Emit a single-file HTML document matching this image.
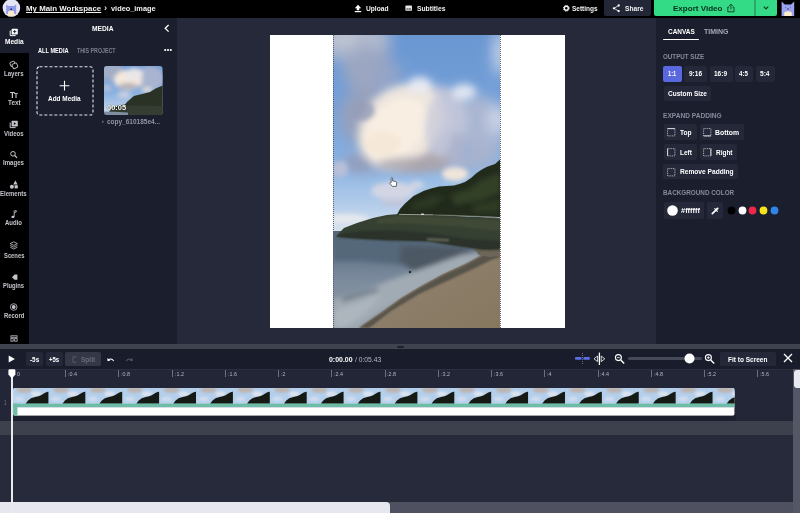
<!DOCTYPE html>
<html>
<head>
<meta charset="utf-8">
<title>video_image</title>
<style>
*{box-sizing:border-box;margin:0;padding:0}
html,body{width:800px;height:513px;overflow:hidden;background:#272b3c}
body{position:relative;font-family:"Liberation Sans",sans-serif;font-size:7px;color:#fff;font-weight:bold}
.a{position:absolute}
.t{position:absolute;white-space:nowrap;line-height:1;transform-origin:0 50%}
svg{position:absolute;overflow:visible}
</style>
</head>
<body>
<div class="a" style="left:0px;top:0px;width:800px;height:18px;background:#000;"></div>
<div class="a" style="left:0px;top:18px;width:29px;height:327px;background:#000;"></div>
<div class="a" style="left:29px;top:18px;width:148px;height:327px;background:#1a1e2d;"></div>
<div class="a" style="left:177px;top:18px;width:479px;height:327px;background:#252939;"></div>
<div class="a" style="left:656px;top:18px;width:144px;height:327px;background:#1a1e2d;"></div>
<div class="a" style="left:0px;top:343.8px;width:800px;height:5.2px;background:#3f4350;"></div>
<div class="a" style="left:0px;top:349px;width:800px;height:20px;background:#191d2b;"></div>
<div class="a" style="left:0px;top:369px;width:793px;height:52px;background:#222636;"></div>
<div class="a" style="left:0px;top:421px;width:793px;height:82px;background:#262a3a;"></div>
<div class="a" style="left:397px;top:345.6px;width:6.5px;height:2px;background:#1c202e;border-radius:1px"></div>
<div class="a" style="left:0px;top:369px;width:793px;height:0.8px;background:#2b2f3e;"></div>
<div class="a" style="left:270px;top:35px;width:295px;height:293px;background:#fff;"></div>
<svg style="left:333px;top:35px" width="167" height="293" viewBox="0 0 167 293">
<defs>
<linearGradient id="sky" x1="0" y1="0" x2="0" y2="1">
<stop offset="0" stop-color="#6a96d1"/><stop offset=".4" stop-color="#76a2da"/><stop offset=".65" stop-color="#8ab2e2"/><stop offset=".85" stop-color="#b3cdea"/><stop offset="1" stop-color="#dde5ee"/>
</linearGradient>
<linearGradient id="sea" x1="0" y1="0" x2="0" y2="1">
<stop offset="0" stop-color="#52657a"/><stop offset=".22" stop-color="#627588"/><stop offset=".5" stop-color="#7b8b9d"/><stop offset=".8" stop-color="#8894a2"/><stop offset="1" stop-color="#939da7"/>
</linearGradient>
<linearGradient id="sand" x1="0" y1="0" x2="1" y2="1">
<stop offset="0" stop-color="#7d705f"/><stop offset=".5" stop-color="#8d7e6a"/><stop offset="1" stop-color="#86775f"/>
</linearGradient>
<filter id="b10" x="-50%" y="-50%" width="200%" height="200%"><feGaussianBlur stdDeviation="10"/></filter>
<filter id="b8" x="-50%" y="-50%" width="200%" height="200%"><feGaussianBlur stdDeviation="7"/></filter>
<filter id="b5" x="-50%" y="-50%" width="200%" height="200%"><feGaussianBlur stdDeviation="4.500"/></filter>
<filter id="b3" x="-50%" y="-50%" width="200%" height="200%"><feGaussianBlur stdDeviation="2.500"/></filter>
<filter id="b1" x="-50%" y="-50%" width="200%" height="200%"><feGaussianBlur stdDeviation="1"/></filter>
<filter id="bh" x="-50%" y="-50%" width="200%" height="200%"><feGaussianBlur stdDeviation="0.500"/></filter>
<clipPath id="pc"><rect x="0" y="0" width="167" height="293"/></clipPath>
</defs>
<g clip-path="url(#pc)">
<rect x="0" y="0" width="167" height="200" fill="url(#sky)"/>
<!-- grey cloud masses -->
<g filter="url(#b8)">
<ellipse cx="20" cy="6" rx="38" ry="20" fill="#b0b9ce"/>
<ellipse cx="36" cy="36" rx="26" ry="24" fill="#9ba6c1"/>
<ellipse cx="30" cy="82" rx="24" ry="28" fill="#96a1bb"/>
<ellipse cx="56" cy="42" rx="12" ry="18" fill="#93a4c8"/>
<ellipse cx="144" cy="92" rx="28" ry="32" fill="#aab6d2"/>
<ellipse cx="130" cy="122" rx="36" ry="14" fill="#a7b2ce"/>
<ellipse cx="30" cy="128" rx="20" ry="9" fill="#95a1c0"/>
<ellipse cx="167" cy="18" rx="7" ry="22" fill="#ccd6e8"/>
<ellipse cx="165" cy="84" rx="9" ry="14" fill="#d0d8ea"/>
</g>
<g filter="url(#b5)">
<ellipse cx="10" cy="4" rx="13" ry="6" fill="#bdc4d3"/>
<ellipse cx="130" cy="114" rx="6" ry="6" fill="#86aee0"/>
</g>
<!-- bright cloud -->
<g filter="url(#b5)">
<ellipse cx="104" cy="84" rx="30" ry="34" fill="#bfc5d9"/>
<ellipse cx="116" cy="112" rx="18" ry="16" fill="#adb4cd"/>
<ellipse cx="80" cy="124" rx="34" ry="11" fill="#b3adb6"/>
<ellipse cx="67" cy="91" rx="47" ry="37" transform="rotate(-46 67 91)" fill="#efe6de"/>
<ellipse cx="87" cy="50" rx="12" ry="8" fill="#e8eaf2"/>
<ellipse cx="131" cy="57" rx="12" ry="8" fill="#e1e7f2"/>
<ellipse cx="26" cy="128" rx="12" ry="7" fill="#939fbd"/>
</g>
<g filter="url(#b3)">
<ellipse cx="63" cy="94" rx="36" ry="25" transform="rotate(-46 63 94)" fill="#f8eee2"/>
<ellipse cx="50" cy="108" rx="18" ry="12" fill="#f6e8d8"/>
<ellipse cx="30" cy="76" rx="12" ry="10" fill="#959eb8" opacity=".8"/>
<ellipse cx="106" cy="92" rx="14" ry="30" fill="#c6c9db" opacity=".7" filter="url(#b3)"/>
</g>
<ellipse cx="80" cy="130" rx="36" ry="7" fill="#a8a2aa" opacity=".8" filter="url(#b5)"/>
<!-- lower small clouds -->
<g filter="url(#b3)">
<ellipse cx="122" cy="139" rx="13" ry="7" fill="#f0e5da"/>
<ellipse cx="60" cy="156" rx="22" ry="9" fill="#d3d5e4"/>
<ellipse cx="62" cy="168" rx="14" ry="4" fill="#c0c6da"/>
<ellipse cx="7" cy="134" rx="8" ry="8" fill="#b9c0d8"/>
<ellipse cx="12" cy="184" rx="24" ry="5" fill="#e6e9ef"/>
<ellipse cx="84" cy="150" rx="7" ry="4" fill="#cfd6e6"/>
</g>
<!-- sea -->
<rect x="0" y="196" width="167" height="97" fill="url(#sea)"/>
<g filter="url(#b3)">
<path d="M0 203 L60 205 L120 211 L148 217 L124 228 L70 230 L30 226 L0 226Z" fill="#55677a"/>
<path d="M68 210 L130 212 L144 221 L118 234 L80 236 L66 226Z" fill="#4e5965"/>
<path d="M0 264 L30 256 L66 242 L100 230 L128 220 L146 217 L150 221 L122 240 L84 258 L52 274 L24 293 L0 293Z" fill="#a1abb4"/>
<path d="M0 276 L26 268 L50 258 L36 274 L12 293 L0 293Z" fill="#adb5bd"/>
<path d="M8 263 L44 253 L46 256 L10 267Z" fill="#6c7986"/>
</g>
<circle cx="77" cy="237" r="1.300" fill="#2a2c2e"/>
<!-- beach -->
<path d="M167 208 L156 214 L147 221 L132 229 L110 239 L88 251 L68 263 L50 276 L26 293 L167 293Z" fill="url(#sand)"/>
<path d="M167 210 L156 215 L147 222 L132 230 L110 240 L88 252 L68 264 L50 277 L26 293 L36 293 L58 276 L86 259 L114 246 L140 234 L158 225 L167 222Z" fill="#57524a" filter="url(#b1)"/>
<path d="M140 213 L150 209 L167 205 L167 221 L156 222 L146 220Z" fill="#6d6658" filter="url(#bh)"/>
<path d="M158 208 L167 206 L167 214 L160 214Z" fill="#918a7c" filter="url(#b1)"/>
<!-- lower headland -->
<path d="M3 201.500 L7 197 L11 193 L24 188 L40 183 L54 180 L66 179 L100 180 L167 183 L167 213 L150 214 L134 212 L120 210 L100 206.500 L88 205.500 L40 204 L15 202.500Z" fill="#363f30" filter="url(#bh)"/>
<path d="M44 184 L66 180.500 L167 185 L167 196 L120 191 L66 188 L44 189Z" fill="#3f4935" filter="url(#b1)"/>
<path d="M3 202 L12 198 L30 196 L60 195.500 L95 198 L133 204 L167 206 L167 215 L150 215 L133 212.500 L95 206.500 L52 205.500 L20 203.500Z" fill="#2b302a" filter="url(#b1)"/>
<path d="M94 203 L116 204 L116 206.500 L94 205.500Z" fill="#66665b" filter="url(#b1)"/>
<!-- upper hill -->
<path d="M64 179.500 L67 174 L72 168.500 L80.500 161 L91 155.800 L98 153.500 L106 151.500 L121 150.400 L128 148.500 L132 147 L138 143 L143 138.600 L148 135 L153.500 132 L162 129 L167 124.500 L167 182 L120 180.500Z" fill="#212b1b" filter="url(#bh)"/>
<g filter="url(#b3)">
<path d="M118 160 L136 154 L150 144 L167 138 L167 158 L146 166 L122 170Z" fill="#324026"/>
<path d="M80 168 L100 160 L112 162 L100 172 L78 176Z" fill="#2b3722"/>
<path d="M140 170 L167 164 L167 178 L140 178Z" fill="#2e3a24"/>
</g>
<!-- road -->
<path d="M66 179.400 L100 179.800" stroke="#b4b4ac" stroke-width="0.800" fill="none"/>
<path d="M100 179.800 L120 180.300 L150 181.500 L167 183.200" stroke="#74786a" stroke-width="0.700" fill="none"/>
<rect x="88" y="178.600" width="3" height="1.200" fill="#e8e8e4"/>
</g>
</svg>
<div class="a" style="left:333px;top:35px;width:1px;height:293px;background:transparent;border-left:1px dotted #5a606c"></div>
<div class="a" style="left:500px;top:35px;width:1px;height:293px;background:transparent;border-left:1px dotted #5a606c"></div>
<svg style="left:389px;top:177px" width="9" height="11" viewBox="0 0 9 11"><path d="M2.200 5.600 L2.200 1.400 Q2.200 0.600 2.900 0.600 Q3.600 0.600 3.600 1.400 L3.600 4 L6.800 4.600 Q7.800 4.900 7.700 6 L7.300 9.400 L3.400 9.400 L1 6.600 Q0.700 5.800 1.400 5.700Z" fill="#fff" stroke="#333" stroke-width="0.700"/></svg>
<svg style="left:0;top:0" width="24" height="18" viewBox="0 0 24 18">
<circle cx="11.400" cy="8" r="8.800" fill="#e4e4f4"/>
<path d="M6.200 14 L6.200 4.600 L8.300 6 L14 6 L16.200 4.600 L16.200 14Z" fill="#909cea"/>
<path d="M8 16.200 L8 12.500 Q8 10.600 11.100 10.600 Q14.200 10.600 14.200 12.500 L14.200 16.200Z" fill="#fbe8c6"/>
<circle cx="11.200" cy="9.200" r="0.900" fill="#2b2f55"/>
</svg>
<div class="t" style="left:26.00px;top:5.00px;font-size:7.8px;color:#f2f2f2;font-weight:bold;transform:scaleX(1.011);text-decoration:underline">My Main Workspace</div>
<div class="t" style="left:103.50px;top:4.00px;font-size:8.5px;color:#d8d8d8;font-weight:bold;transform:scaleX(1.130);">›</div>
<div class="t" style="left:110.80px;top:5.00px;font-size:7.8px;color:#f2f2f2;font-weight:bold;transform:scaleX(0.944);">video_image</div>
<svg style="left:354px;top:4px" width="8" height="9" viewBox="0 0 8 9">
<path d="M4 0.800 L7.200 4.200 L5.300 4.200 L5.300 6.300 L2.700 6.300 L2.700 4.200 L0.800 4.200Z" fill="#fff"/>
<rect x="0.800" y="7" width="6.400" height="1.200" fill="#fff"/>
</svg>
<div class="t" style="left:365.60px;top:5.00px;font-size:7.2px;color:#f2f2f2;font-weight:bold;transform:scaleX(0.926);">Upload</div>
<svg style="left:405px;top:5px" width="8" height="7" viewBox="0 0 8 7">
<rect x="0.400" y="0.600" width="6.600" height="5.200" rx="0.800" fill="#e8e8e8"/>
<rect x="1.400" y="3.500" width="1.500" height="1" fill="#222"/><rect x="3.400" y="3.500" width="2.600" height="1" fill="#222"/>
</svg>
<div class="t" style="left:417.00px;top:5.00px;font-size:7.2px;color:#f2f2f2;font-weight:bold;transform:scaleX(0.937);">Subtitles</div>
<svg style="left:562px;top:4px" width="9" height="9" viewBox="0 0 9 9">
<circle cx="4.300" cy="4.300" r="2" fill="none" stroke="#f2f2f2" stroke-width="1.400"/>
<circle cx="4.300" cy="4.300" r="2.900" fill="none" stroke="#f2f2f2" stroke-width="1" stroke-dasharray="1.140 1.138"/>
</svg>
<div class="t" style="left:572.30px;top:5.00px;font-size:7.2px;color:#f2f2f2;font-weight:bold;transform:scaleX(0.901);">Settings</div>
<div class="a" style="left:604px;top:0px;width:47px;height:16px;background:#222637;border-radius:0 0 2px 2px"></div>
<svg style="left:612px;top:4px" width="9" height="9" viewBox="0 0 9 9">
<path d="M6.500 1.600 L2 4.300 L6.500 7" stroke="#fff" stroke-width="0.800" fill="none"/>
<circle cx="6.700" cy="1.500" r="1.150" fill="#fff"/><circle cx="1.900" cy="4.300" r="1.150" fill="#fff"/><circle cx="6.700" cy="7.100" r="1.150" fill="#fff"/>
</svg>
<div class="t" style="left:624.50px;top:5.00px;font-size:7.2px;color:#f2f2f2;font-weight:bold;transform:scaleX(0.924);">Share</div>
<div class="a" style="left:654px;top:0px;width:123px;height:16px;background:#34db87;border-radius:0 0 2px 2px"></div>
<div class="a" style="left:754.3px;top:0px;width:1.3px;height:16px;background:#2aa96a;"></div>
<div class="t" style="left:673.00px;top:5.00px;font-size:7.8px;color:#07301a;font-weight:bold;transform:scaleX(1.032);">Export Video</div>
<svg style="left:726px;top:3px" width="10" height="10" viewBox="0 0 10 10">
<path d="M3.200 4 L1.800 4 L1.800 8.800 L8 8.800 L8 4 L6.600 4" stroke="#0b3b20" stroke-width="0.900" fill="none"/>
<path d="M4.900 6.500 L4.900 1.200 M3.200 2.800 L4.900 1.100 L6.600 2.800" stroke="#0b3b20" stroke-width="0.900" fill="none"/>
</svg>
<svg style="left:763px;top:6px" width="6" height="4" viewBox="0 0 6 4">
<path d="M0.800 0.700 L3 2.900 L5.200 0.700" stroke="#0b3b20" stroke-width="1.200" fill="none"/>
</svg>
<svg style="left:781px;top:1px" width="14" height="16" viewBox="0 0 14 16">
<path d="M0.600 15.100 L0.600 0.500 L3.800 3.400 L10 3.400 L13.200 0.500 L13.200 15.100Z" fill="#9aa3ee"/>
<path d="M3.200 15.100 L3.200 12.600 Q3.200 10.200 7 10.200 Q10.800 10.200 10.800 12.600 L10.800 15.100Z" fill="#fcecc8"/>
<path d="M6 7.600 L8 7.600 L7 9Z" fill="#262a50"/>
<circle cx="4.400" cy="6.300" r="0.550" fill="#5560c8"/><circle cx="9.600" cy="6.300" r="0.550" fill="#5560c8"/>
</svg>
<div class="a" style="left:0px;top:18px;width:29px;height:34.6px;background:#1a1e2d;"></div>
<svg style="left:9px;top:28px" width="10" height="9" viewBox="0 0 10 9"><path d="M1.200 2.600 L1.200 7.600 L6.600 7.600" stroke="#fff" stroke-width="1" fill="none"/><rect x="2.600" y="0.800" width="6.200" height="5.600" rx="0.600" fill="#fff"/><path d="M5.700 2 L5.700 5.200 M4.100 3.600 L7.300 3.600" stroke="#1b1f2e" stroke-width="0.900"/></svg>
<div class="t" style="left:4.60px;top:38.00px;font-size:7.0px;color:#fff;font-weight:bold;transform:scaleX(0.938);">Media</div>
<svg style="left:9px;top:60px" width="10" height="10" viewBox="0 0 10 10"><rect x="1.200" y="1.600" width="4.800" height="4.400" rx="1.200" fill="none" stroke="#c4c4cc" stroke-width="0.900" transform="rotate(-25 3.600 3.800)"/><rect x="3.400" y="3.400" width="5" height="4.800" rx="1.200" fill="#000" stroke="#c4c4cc" stroke-width="0.900" transform="rotate(-25 5.900 5.800)"/></svg>
<div class="t" style="left:3.60px;top:70.00px;font-size:7.0px;color:#c4c4cc;font-weight:bold;transform:scaleX(0.868);">Layers</div>
<div class="t" style="left:9.80px;top:91.00px;font-size:9px;color:#d0d0d6;font-weight:bold;transform:scaleX(0.873);">T</div>
<div class="t" style="left:14.00px;top:92.00px;font-size:7px;color:#d0d0d6;font-weight:bold;transform:scaleX(0.935);">T</div>
<div class="t" style="left:7.60px;top:99.00px;font-size:7.0px;color:#c4c4cc;font-weight:bold;transform:scaleX(0.908);">Text</div>
<svg style="left:9px;top:120px" width="10" height="9" viewBox="0 0 10 9"><path d="M1.200 2.600 L1.200 7.600 L6.600 7.600" stroke="#c4c4cc" stroke-width="1" fill="none"/><rect x="2.600" y="0.800" width="6.200" height="5.600" rx="0.600" fill="#c4c4cc"/><path d="M4.900 2.200 L7 3.600 L4.900 5Z" fill="#000"/></svg>
<div class="t" style="left:4.00px;top:130.00px;font-size:7.0px;color:#c4c4cc;font-weight:bold;transform:scaleX(0.859);">Videos</div>
<svg style="left:9px;top:150px" width="10" height="10" viewBox="0 0 10 10"><circle cx="4" cy="3.800" r="2.300" fill="none" stroke="#c4c4cc" stroke-width="1"/><path d="M5.700 5.500 L8 7.800" stroke="#c4c4cc" stroke-width="1.200"/></svg>
<div class="t" style="left:3.20px;top:159.00px;font-size:7.0px;color:#c4c4cc;font-weight:bold;transform:scaleX(0.870);">Images</div>
<svg style="left:9px;top:180px" width="10" height="10" viewBox="0 0 10 10"><path d="M6.400 0.600 L8.600 4.400 L4.200 4.400Z" fill="#c4c4cc"/><circle cx="2.900" cy="6.800" r="2" fill="#c4c4cc"/><rect x="5.600" y="5.200" width="3.200" height="3.200" fill="#c4c4cc"/></svg>
<div class="t" style="left:0.40px;top:190.00px;font-size:7.0px;color:#c4c4cc;font-weight:bold;transform:scaleX(0.855);">Elements</div>
<svg style="left:10px;top:210px" width="8" height="10" viewBox="0 0 8 10"><path d="M3.400 1.300 L6.200 0.600 L6.200 2 L4.200 2.500 L4.200 6.800" stroke="#c4c4cc" stroke-width="0.900" fill="none"/><ellipse cx="2.900" cy="6.900" rx="1.500" ry="1.200" fill="#c4c4cc"/></svg>
<div class="t" style="left:5.20px;top:219.00px;font-size:7.0px;color:#c4c4cc;font-weight:bold;transform:scaleX(0.857);">Audio</div>
<svg style="left:9px;top:241px" width="10" height="10" viewBox="0 0 10 10"><path d="M4.800 0.800 L8.400 2.600 L4.800 4.400 L1.200 2.600Z" fill="none" stroke="#c4c4cc" stroke-width="0.800"/><path d="M1.200 4.400 L4.800 6.200 L8.400 4.400 M1.200 6.200 L4.800 8 L8.400 6.200" fill="none" stroke="#c4c4cc" stroke-width="0.800"/></svg>
<div class="t" style="left:3.60px;top:252.00px;font-size:7.0px;color:#c4c4cc;font-weight:bold;transform:scaleX(0.832);">Scenes</div>
<svg style="left:9px;top:273px" width="10" height="8" viewBox="0 0 10 8"><path d="M1 4.200 L3 4.200 L5.600 1.600 L8.400 1.600 L8.400 6.800 L5.600 6.800 L3 4.200Z" fill="#c4c4cc"/></svg>
<div class="t" style="left:3.20px;top:282.00px;font-size:7.0px;color:#c4c4cc;font-weight:bold;transform:scaleX(0.831);">Plugins</div>
<svg style="left:9px;top:302px" width="10" height="10" viewBox="0 0 10 10"><circle cx="4.700" cy="5" r="3.300" fill="none" stroke="#c4c4cc" stroke-width="0.800"/><circle cx="4.700" cy="5" r="1.900" fill="#c4c4cc"/></svg>
<div class="t" style="left:3.60px;top:312.00px;font-size:7.0px;color:#c4c4cc;font-weight:bold;transform:scaleX(0.846);">Record</div>
<svg style="left:9.5px;top:335px" width="8" height="7" viewBox="0 0 8 7"><rect x="0.900" y="0.800" width="6.200" height="1.500" fill="none" stroke="#c4c4cc" stroke-width="0.800"/><rect x="0.900" y="3.600" width="2.300" height="2.600" fill="none" stroke="#c4c4cc" stroke-width="0.800"/><rect x="4.700" y="3.600" width="2.400" height="2.600" fill="none" stroke="#c4c4cc" stroke-width="0.800"/></svg>
<div class="a" style="left:0;top:341px;width:29px;height:3px;overflow:hidden"><div class="t" style="left:1.500px;top:1.500px;font-size:7px;color:#8a8a92;transform:scaleX(.78)">Templates</div></div>
<div class="t" style="left:92.30px;top:25.00px;font-size:7.2px;color:#fff;font-weight:bold;transform:scaleX(0.931);">MEDIA</div>
<svg style="left:163px;top:24px" width="8" height="9" viewBox="0 0 8 9"><path d="M5.600 1 L2.200 4.300 L5.600 7.600" stroke="#fff" stroke-width="1.300" fill="none"/></svg>
<div class="t" style="left:38.00px;top:48.00px;font-size:6.8px;color:#fff;font-weight:bold;transform:scaleX(0.829);">ALL MEDIA</div>
<div class="t" style="left:77.00px;top:48.00px;font-size:6.8px;color:#7c8091;font-weight:bold;transform:scaleX(0.780);">THIS PROJECT</div>
<svg style="left:163px;top:48px" width="10" height="4" viewBox="0 0 10 4"><circle cx="2.200" cy="2" r="1.100" fill="#fff"/><circle cx="5" cy="2" r="1.100" fill="#fff"/><circle cx="7.800" cy="2" r="1.100" fill="#fff"/></svg>
<svg style="left:36px;top:66px" width="58" height="50" viewBox="0 0 58 50"><rect x="1" y="0.800" width="56" height="48.200" rx="2.500" fill="none" stroke="#e6e6ea" stroke-width="1.100" stroke-dasharray="3 2"/><path d="M28.500 14.800 L28.500 24.600 M23.600 19.700 L33.400 19.700" stroke="#fff" stroke-width="1.100"/></svg>
<div class="t" style="left:48.20px;top:95.00px;font-size:7.2px;color:#fff;font-weight:bold;transform:scaleX(0.896);">Add Media</div>
<svg style="left:103.500px;top:66.200px" width="58.700" height="49" viewBox="0 0 58.700 49">
<defs><clipPath id="tc"><rect x="0" y="0" width="58.700" height="49" rx="3"/></clipPath>
<linearGradient id="tsk" x1="0" y1="0" x2="0" y2="1"><stop offset="0" stop-color="#6f9ad2"/><stop offset=".55" stop-color="#8ab1e0"/><stop offset="1" stop-color="#cfdcec"/></linearGradient>
<filter id="tb" x="-50%" y="-50%" width="200%" height="200%"><feGaussianBlur stdDeviation="2.200"/></filter>
<filter id="tb1" x="-50%" y="-50%" width="200%" height="200%"><feGaussianBlur stdDeviation="0.500"/></filter></defs>
<g clip-path="url(#tc)">
<rect width="58.700" height="49" fill="url(#tsk)"/>
<g filter="url(#tb)"><ellipse cx="8" cy="6" rx="12" ry="9" fill="#a3adc6"/><ellipse cx="46" cy="12" rx="14" ry="12" fill="#a9b4d0"/><ellipse cx="24" cy="14" rx="14" ry="10" fill="#f3e8dc"/><ellipse cx="30" cy="8" rx="9" ry="6" fill="#eae6e8"/><ellipse cx="24" cy="20" rx="10" ry="3" fill="#b7aeb4"/><ellipse cx="43" cy="24" rx="5" ry="2.500" fill="#e9e0d8"/><ellipse cx="20" cy="29" rx="7" ry="3" fill="#cfd2e2"/><ellipse cx="3" cy="22" rx="4" ry="3" fill="#bcc3da"/></g>
<path d="M5 46 L8 42 L14 39.500 L21 38.500 L23 36 L29.800 30 L38 28 L46 26 L51.600 22.500 L58.700 19.500 L58.700 49 L0 49 L0 46.500Z" fill="#2a3325" filter="url(#tb1)"/>
<path d="M8 43 L20 39.500 L58.700 40 L58.700 49 L20 49 L6 47Z" fill="#353d30" filter="url(#tb1)"/>
<path d="M0 45.500 L10 45.800 L24 46.600 L24 49 L0 49Z" fill="#7f8ea0"/>
</g></svg>
<div class="t" style="left:107.00px;top:104.00px;font-size:7.4px;color:#fff;font-weight:bold;transform:scaleX(1.014);text-shadow:0 0 1px #000">00:05</div>
<div class="t" style="left:102.30px;top:119.00px;font-size:5px;color:#9a9eae;font-weight:bold;transform:scaleX(1.081);">›</div>
<div class="t" style="left:107.00px;top:119.00px;font-size:6.8px;color:#9095a6;font-weight:bold;transform:scaleX(0.954);">copy_610185e4...</div>
<div class="t" style="left:667.50px;top:28.00px;font-size:7.2px;color:#fff;font-weight:bold;transform:scaleX(0.897);">CANVAS</div>
<div class="t" style="left:703.50px;top:28.00px;font-size:7.2px;color:#a4a8b8;font-weight:bold;transform:scaleX(0.972);">TIMING</div>
<div class="a" style="left:663px;top:38.7px;width:36px;height:1.8px;background:#fff;border-radius:1px"></div>
<div class="t" style="left:663.30px;top:54.00px;font-size:6.8px;color:#868a9b;font-weight:bold;transform:scaleX(0.916);">OUTPUT SIZE</div>
<div class="a" style="left:663px;top:66px;width:18.5px;height:16px;background:#5a68e0;border-radius:2px"></div>
<div class="t" style="left:668.00px;top:70.00px;font-size:7.0px;color:#fff;font-weight:bold;transform:scaleX(0.810);">1:1</div>
<div class="a" style="left:683.8px;top:66px;width:23.7px;height:16px;background:#242839;border-radius:2px"></div>
<div class="t" style="left:689.00px;top:70.00px;font-size:7.0px;color:#fff;font-weight:bold;transform:scaleX(0.928);">9:16</div>
<div class="a" style="left:710px;top:66px;width:22.5px;height:16px;background:#242839;border-radius:2px"></div>
<div class="t" style="left:714.20px;top:70.00px;font-size:7.0px;color:#fff;font-weight:bold;transform:scaleX(0.928);">16:9</div>
<div class="a" style="left:735px;top:66px;width:18px;height:16px;background:#242839;border-radius:2px"></div>
<div class="t" style="left:739.20px;top:70.00px;font-size:7.0px;color:#fff;font-weight:bold;transform:scaleX(0.890);">4:5</div>
<div class="a" style="left:755.5px;top:66px;width:19px;height:16px;background:#242839;border-radius:2px"></div>
<div class="t" style="left:760.00px;top:70.00px;font-size:7.0px;color:#fff;font-weight:bold;transform:scaleX(0.939);">5:4</div>
<div class="a" style="left:663.5px;top:85.7px;width:47.5px;height:15.6px;background:#242839;border-radius:2px"></div>
<div class="t" style="left:667.60px;top:90.00px;font-size:7.0px;color:#fff;font-weight:bold;transform:scaleX(0.928);">Custom Size</div>
<div class="t" style="left:663.30px;top:113.00px;font-size:6.8px;color:#868a9b;font-weight:bold;transform:scaleX(0.969);">EXPAND PADDING</div>
<div class="a" style="left:663.7px;top:124.2px;width:33.3px;height:15.8px;background:#242839;border-radius:2px"></div>
<svg style="left:667px;top:128.2px" width="8.500" height="8.500" viewBox="0 0 8.500 8.500"><rect x="0.600" y="0.600" width="7.300" height="7.300" fill="none" stroke="#d8d8de" stroke-width="0.800" stroke-dasharray="1 0.820"/><path d="M0.600 0.600 L7.900 0.600" stroke="#e4e4ea" stroke-width="0.900"/></svg>
<div class="t" style="left:679.60px;top:129.00px;font-size:7.0px;color:#fff;font-weight:bold;transform:scaleX(0.942);">Top</div>
<div class="a" style="left:699.5px;top:124.2px;width:44.3px;height:15.8px;background:#242839;border-radius:2px"></div>
<svg style="left:703px;top:128.2px" width="8.500" height="8.500" viewBox="0 0 8.500 8.500"><rect x="0.600" y="0.600" width="7.300" height="7.300" fill="none" stroke="#d8d8de" stroke-width="0.800" stroke-dasharray="1 0.820"/><path d="M0.600 7.900 L7.900 7.900" stroke="#e4e4ea" stroke-width="0.900"/></svg>
<div class="t" style="left:715.00px;top:129.00px;font-size:7.0px;color:#fff;font-weight:bold;transform:scaleX(0.980);">Bottom</div>
<div class="a" style="left:663.7px;top:144px;width:33.3px;height:16px;background:#242839;border-radius:2px"></div>
<svg style="left:667px;top:148px" width="8.500" height="8.500" viewBox="0 0 8.500 8.500"><rect x="0.600" y="0.600" width="7.300" height="7.300" fill="none" stroke="#d8d8de" stroke-width="0.800" stroke-dasharray="1 0.820"/><path d="M0.600 0.600 L0.600 7.900" stroke="#e4e4ea" stroke-width="0.900"/></svg>
<div class="t" style="left:679.60px;top:149.00px;font-size:7.0px;color:#fff;font-weight:bold;transform:scaleX(0.920);">Left</div>
<div class="a" style="left:699.5px;top:144px;width:37.5px;height:16px;background:#242839;border-radius:2px"></div>
<svg style="left:703px;top:148px" width="8.500" height="8.500" viewBox="0 0 8.500 8.500"><rect x="0.600" y="0.600" width="7.300" height="7.300" fill="none" stroke="#d8d8de" stroke-width="0.800" stroke-dasharray="1 0.820"/><path d="M7.900 0.600 L7.900 7.900" stroke="#e4e4ea" stroke-width="0.900"/></svg>
<div class="t" style="left:715.50px;top:149.00px;font-size:7.0px;color:#fff;font-weight:bold;transform:scaleX(0.923);">Right</div>
<div class="a" style="left:663.3px;top:163.7px;width:74.7px;height:15.5px;background:#242839;border-radius:2px"></div>
<svg style="left:667px;top:167.5px" width="8.500" height="8.500" viewBox="0 0 8.500 8.500"><rect x="0.600" y="0.600" width="7.300" height="7.300" fill="none" stroke="#d8d8de" stroke-width="0.800" stroke-dasharray="1 0.820"/><path d="" stroke="#e4e4ea" stroke-width="0.900"/></svg>
<div class="t" style="left:679.60px;top:168.00px;font-size:7.0px;color:#fff;font-weight:bold;transform:scaleX(0.944);">Remove Padding</div>
<div class="t" style="left:663.30px;top:190.00px;font-size:6.8px;color:#868a9b;font-weight:bold;transform:scaleX(0.933);">BACKGROUND COLOR</div>
<div class="a" style="left:664px;top:202px;width:40px;height:16.5px;background:#242839;border-radius:2px"></div>
<svg style="left:667px;top:204.700px" width="11" height="11" viewBox="0 0 11 11"><circle cx="5.500" cy="5.500" r="5.300" fill="#fff"/></svg>
<div class="t" style="left:680.60px;top:208.00px;font-size:6.8px;color:#fff;font-weight:bold;transform:scaleX(1.094);">#ffffff</div>
<div class="a" style="left:707px;top:202px;width:16px;height:16.5px;background:#242839;border-radius:2px"></div>
<svg style="left:710.500px;top:206px" width="9" height="9" viewBox="0 0 9 9"><path d="M1.300 7.700 L4.600 4.400" stroke="#fff" stroke-width="1.700" stroke-linecap="round"/><path d="M3.700 2.700 L6.300 5.300" stroke="#fff" stroke-width="1.100" stroke-linecap="round"/><path d="M5 4 L6.600 2.400" stroke="#fff" stroke-width="1.900" stroke-linecap="round"/></svg>
<svg style="left:727.2px;top:205.500px" width="9" height="9" viewBox="0 0 9 9"><circle cx="4.500" cy="4.500" r="3.900" fill="#000"/></svg>
<svg style="left:737.7px;top:205.500px" width="9" height="9" viewBox="0 0 9 9"><circle cx="4.500" cy="4.500" r="3.900" fill="#fff"/></svg>
<svg style="left:748.3px;top:205.500px" width="9" height="9" viewBox="0 0 9 9"><circle cx="4.500" cy="4.500" r="3.900" fill="#f0264a"/></svg>
<svg style="left:758.8px;top:205.500px" width="9" height="9" viewBox="0 0 9 9"><circle cx="4.500" cy="4.500" r="3.900" fill="#f6e51e"/></svg>
<svg style="left:769.5px;top:205.500px" width="9" height="9" viewBox="0 0 9 9"><circle cx="4.500" cy="4.500" r="3.900" fill="#2f84e4"/></svg>
<svg style="left:7.500px;top:355px" width="8" height="8" viewBox="0 0 8 8"><path d="M0.700 0.400 L6.900 3.900 L0.700 7.400Z" fill="#fff"/></svg>
<div class="a" style="left:26.3px;top:352.4px;width:16.5px;height:13.3px;background:#242839;border-radius:2px"></div>
<div class="t" style="left:30.20px;top:356.00px;font-size:7.0px;color:#fff;font-weight:bold;transform:scaleX(0.909);">-5s</div>
<div class="a" style="left:46.4px;top:352.4px;width:16.6px;height:13.3px;background:#242839;border-radius:2px"></div>
<div class="t" style="left:49.20px;top:356.00px;font-size:7.0px;color:#fff;font-weight:bold;transform:scaleX(0.859);">+5s</div>
<div class="a" style="left:65.2px;top:352.4px;width:36px;height:13.3px;background:#343846;border-radius:2px"></div>
<svg style="left:72px;top:355.500px" width="6" height="7" viewBox="0 0 6 7"><path d="M1 0.800 L1 6.200 M1 0.800 L4.400 0.800 M1 6.200 L4.400 6.200" stroke="#5b5f6e" stroke-width="0.900" fill="none"/></svg>
<div class="t" style="left:80.60px;top:356.00px;font-size:7.0px;color:#666a7a;font-weight:bold;transform:scaleX(0.936);">Split</div>
<svg style="left:107px;top:356.500px" width="8" height="6" viewBox="0 0 8 6"><path d="M0.400 1 L0.400 4 L3.400 4 L2.200 2.900 Q4.400 1.600 6.400 4.300 L7.300 3.900 Q4.800 0.200 1.500 2.100Z" fill="#fff"/></svg>
<svg style="left:124.500px;top:356.500px" width="8" height="6" viewBox="0 0 8 6"><path d="M7.600 1 L7.600 4 L4.600 4 L5.800 2.900 Q3.600 1.600 1.600 4.300 L0.700 3.900 Q3.200 0.200 6.500 2.100Z" fill="#555968"/></svg>
<div class="t" style="left:328.60px;top:356.00px;font-size:7.0px;color:#fff;font-weight:bold;transform:scaleX(0.994);">0:00.00</div>
<div class="t" style="left:354.60px;top:356.00px;font-size:7.0px;color:#b4b8c6;font-weight:normal;transform:scaleX(0.962);">/ 0:05.43</div>
<svg style="left:574px;top:352px" width="17" height="13" viewBox="0 0 17 13"><rect x="1" y="5" width="6.600" height="2.800" rx="1" fill="#5a6ee6"/><rect x="9.300" y="5" width="6.600" height="2.800" rx="1" fill="#5a6ee6"/><path d="M8.500 1 L8.500 12" stroke="#8a90a8" stroke-width="0.700" stroke-dasharray="1 1"/></svg>
<svg style="left:593px;top:351.500px" width="13" height="14" viewBox="0 0 13 14"><path d="M6.400 0.600 L6.400 13" stroke="#fff" stroke-width="1.300"/><path d="M4.600 4 L4.600 9.600 L1 6.800Z M8.200 4 L8.200 9.600 L11.800 6.800Z" fill="none" stroke="#fff" stroke-width="0.800"/></svg>
<svg style="left:614px;top:353px" width="12" height="12" viewBox="0 0 12 12"><circle cx="4.400" cy="4.600" r="3" fill="none" stroke="#fff" stroke-width="1.100"/><path d="M6.700 6.900 L10.200 10.400" stroke="#fff" stroke-width="1.400"/><path d="M3 4.600 L5.800 4.600" stroke="#fff" stroke-width="0.800"/></svg>
<div class="a" style="left:628px;top:356.6px;width:74px;height:3px;background:#444857;border-radius:1.500px"></div>
<svg style="left:684px;top:352.500px" width="11" height="11" viewBox="0 0 11 11"><circle cx="5.500" cy="5.500" r="5" fill="#fff"/></svg>
<svg style="left:704px;top:353px" width="12" height="12" viewBox="0 0 12 12"><circle cx="4.400" cy="4.600" r="3" fill="none" stroke="#fff" stroke-width="1.100"/><path d="M6.700 6.900 L10.200 10.400" stroke="#fff" stroke-width="1.400"/><path d="M3 4.600 L5.800 4.600 M4.400 3.200 L4.400 6" stroke="#fff" stroke-width="0.800"/></svg>
<div class="a" style="left:720px;top:352.2px;width:55.7px;height:13.6px;background:#242839;border-radius:2px"></div>
<div class="t" style="left:727.60px;top:356.00px;font-size:7.0px;color:#fff;font-weight:bold;transform:scaleX(0.929);">Fit to Screen</div>
<svg style="left:783px;top:352.500px" width="10" height="10" viewBox="0 0 10 10"><path d="M1 1 L9 9 M9 1 L1 9" stroke="#fff" stroke-width="1.300"/></svg>
<div class="t" style="left:16.80px;top:371.00px;font-size:6px;color:#b2b6c4;font-weight:normal;transform:scaleX(0.899);">0</div>
<div class="a" style="left:65.2px;top:370.3px;width:1px;height:7.2px;background:#6c7080;"></div>
<div class="t" style="left:68.08px;top:371.00px;font-size:6px;color:#b2b6c4;font-weight:normal;transform:scaleX(0.899);">:0.4</div>
<div class="a" style="left:118.4px;top:370.3px;width:1px;height:7.2px;background:#6c7080;"></div>
<div class="t" style="left:121.31px;top:371.00px;font-size:6px;color:#b2b6c4;font-weight:normal;transform:scaleX(0.899);">:0.8</div>
<div class="a" style="left:171.6px;top:370.3px;width:1px;height:7.2px;background:#6c7080;"></div>
<div class="t" style="left:174.54px;top:371.00px;font-size:6px;color:#b2b6c4;font-weight:normal;transform:scaleX(0.899);">:1.2</div>
<div class="a" style="left:224.9px;top:370.3px;width:1px;height:7.2px;background:#6c7080;"></div>
<div class="t" style="left:227.77px;top:371.00px;font-size:6px;color:#b2b6c4;font-weight:normal;transform:scaleX(0.899);">:1.6</div>
<div class="a" style="left:278.1px;top:370.3px;width:1px;height:7.2px;background:#6c7080;"></div>
<div class="t" style="left:281.00px;top:371.00px;font-size:6px;color:#b2b6c4;font-weight:normal;transform:scaleX(0.879);">:2</div>
<div class="a" style="left:331.3px;top:370.3px;width:1px;height:7.2px;background:#6c7080;"></div>
<div class="t" style="left:334.23px;top:371.00px;font-size:6px;color:#b2b6c4;font-weight:normal;transform:scaleX(0.899);">:2.4</div>
<div class="a" style="left:384.6px;top:370.3px;width:1px;height:7.2px;background:#6c7080;"></div>
<div class="t" style="left:387.46px;top:371.00px;font-size:6px;color:#b2b6c4;font-weight:normal;transform:scaleX(0.899);">:2.8</div>
<div class="a" style="left:437.8px;top:370.3px;width:1px;height:7.2px;background:#6c7080;"></div>
<div class="t" style="left:440.69px;top:371.00px;font-size:6px;color:#b2b6c4;font-weight:normal;transform:scaleX(0.899);">:3.2</div>
<div class="a" style="left:491.0px;top:370.3px;width:1px;height:7.2px;background:#6c7080;"></div>
<div class="t" style="left:493.92px;top:371.00px;font-size:6px;color:#b2b6c4;font-weight:normal;transform:scaleX(0.899);">:3.6</div>
<div class="a" style="left:544.2px;top:370.3px;width:1px;height:7.2px;background:#6c7080;"></div>
<div class="t" style="left:547.15px;top:371.00px;font-size:6px;color:#b2b6c4;font-weight:normal;transform:scaleX(0.879);">:4</div>
<div class="a" style="left:597.5px;top:370.3px;width:1px;height:7.2px;background:#6c7080;"></div>
<div class="t" style="left:600.38px;top:371.00px;font-size:6px;color:#b2b6c4;font-weight:normal;transform:scaleX(0.899);">:4.4</div>
<div class="a" style="left:650.7px;top:370.3px;width:1px;height:7.2px;background:#6c7080;"></div>
<div class="t" style="left:653.61px;top:371.00px;font-size:6px;color:#b2b6c4;font-weight:normal;transform:scaleX(0.899);">:4.8</div>
<div class="a" style="left:703.9px;top:370.3px;width:1px;height:7.2px;background:#6c7080;"></div>
<div class="t" style="left:706.84px;top:371.00px;font-size:6px;color:#b2b6c4;font-weight:normal;transform:scaleX(0.899);">:5.2</div>
<div class="a" style="left:757.2px;top:370.3px;width:1px;height:7.2px;background:#6c7080;"></div>
<div class="t" style="left:760.07px;top:371.00px;font-size:6px;color:#b2b6c4;font-weight:normal;transform:scaleX(0.899);">:5.6</div>
<div class="a" style="left:0px;top:420.5px;width:793px;height:14.5px;background:#3d414e;"></div>
<div class="a" style="left:13px;top:414px;width:722.5px;height:6.5px;background:#1c202e;border-radius:0 0 2px 2px"></div>
<div class="t" style="left:4.20px;top:400.00px;font-size:6.5px;color:#7c8090;font-weight:normal;transform:scaleX(0.664);">1</div>
<svg style="left:13.300px;top:388.200px" width="721.700" height="27.800" viewBox="0 0 721.700 27.800">
<defs><clipPath id="cc"><rect x="0" y="0" width="721.700" height="27.800" rx="2"/></clipPath><filter id="cb" x="-50%" y="-50%" width="200%" height="200%"><feGaussianBlur stdDeviation="1"/></filter></defs>
<g clip-path="url(#cc)">
<rect width="721.700" height="27.800" fill="#fff"/>
<rect width="721.700" height="15.800" fill="#b4cfec"/>
<g transform="translate(0.0 0)"><ellipse cx="11" cy="1.800" rx="8" ry="3" fill="#bdb5b2" filter="url(#cb)"/><ellipse cx="23" cy="6" rx="5" ry="2.400" fill="#dfe4ee" filter="url(#cb)"/><ellipse cx="6" cy="11" rx="5" ry="2.500" fill="#cfdcee" filter="url(#cb)"/><path d="M12.500 15.800 L15 12.500 L18 10.200 L22 9 L25.400 8.300 L28 7.200 L30.400 5.800 L32.500 4.600 L34.800 3.800 L35.400 3.800 L35.400 15.800Z" fill="#161a14"/></g><g transform="translate(36.9 0)"><ellipse cx="11" cy="1.800" rx="8" ry="3" fill="#bdb5b2" filter="url(#cb)"/><ellipse cx="23" cy="6" rx="5" ry="2.400" fill="#dfe4ee" filter="url(#cb)"/><ellipse cx="6" cy="11" rx="5" ry="2.500" fill="#cfdcee" filter="url(#cb)"/><path d="M12.500 15.800 L15 12.500 L18 10.200 L22 9 L25.400 8.300 L28 7.200 L30.400 5.800 L32.500 4.600 L34.800 3.800 L35.400 3.800 L35.400 15.800Z" fill="#161a14"/></g><g transform="translate(73.8 0)"><ellipse cx="11" cy="1.800" rx="8" ry="3" fill="#bdb5b2" filter="url(#cb)"/><ellipse cx="23" cy="6" rx="5" ry="2.400" fill="#dfe4ee" filter="url(#cb)"/><ellipse cx="6" cy="11" rx="5" ry="2.500" fill="#cfdcee" filter="url(#cb)"/><path d="M12.500 15.800 L15 12.500 L18 10.200 L22 9 L25.400 8.300 L28 7.200 L30.400 5.800 L32.500 4.600 L34.800 3.800 L35.400 3.800 L35.400 15.800Z" fill="#161a14"/></g><g transform="translate(110.7 0)"><ellipse cx="11" cy="1.800" rx="8" ry="3" fill="#bdb5b2" filter="url(#cb)"/><ellipse cx="23" cy="6" rx="5" ry="2.400" fill="#dfe4ee" filter="url(#cb)"/><ellipse cx="6" cy="11" rx="5" ry="2.500" fill="#cfdcee" filter="url(#cb)"/><path d="M12.500 15.800 L15 12.500 L18 10.200 L22 9 L25.400 8.300 L28 7.200 L30.400 5.800 L32.500 4.600 L34.800 3.800 L35.400 3.800 L35.400 15.800Z" fill="#161a14"/></g><g transform="translate(147.6 0)"><ellipse cx="11" cy="1.800" rx="8" ry="3" fill="#bdb5b2" filter="url(#cb)"/><ellipse cx="23" cy="6" rx="5" ry="2.400" fill="#dfe4ee" filter="url(#cb)"/><ellipse cx="6" cy="11" rx="5" ry="2.500" fill="#cfdcee" filter="url(#cb)"/><path d="M12.500 15.800 L15 12.500 L18 10.200 L22 9 L25.400 8.300 L28 7.200 L30.400 5.800 L32.500 4.600 L34.800 3.800 L35.400 3.800 L35.400 15.800Z" fill="#161a14"/></g><g transform="translate(184.5 0)"><ellipse cx="11" cy="1.800" rx="8" ry="3" fill="#bdb5b2" filter="url(#cb)"/><ellipse cx="23" cy="6" rx="5" ry="2.400" fill="#dfe4ee" filter="url(#cb)"/><ellipse cx="6" cy="11" rx="5" ry="2.500" fill="#cfdcee" filter="url(#cb)"/><path d="M12.500 15.800 L15 12.500 L18 10.200 L22 9 L25.400 8.300 L28 7.200 L30.400 5.800 L32.500 4.600 L34.800 3.800 L35.400 3.800 L35.400 15.800Z" fill="#161a14"/></g><g transform="translate(221.4 0)"><ellipse cx="11" cy="1.800" rx="8" ry="3" fill="#bdb5b2" filter="url(#cb)"/><ellipse cx="23" cy="6" rx="5" ry="2.400" fill="#dfe4ee" filter="url(#cb)"/><ellipse cx="6" cy="11" rx="5" ry="2.500" fill="#cfdcee" filter="url(#cb)"/><path d="M12.500 15.800 L15 12.500 L18 10.200 L22 9 L25.400 8.300 L28 7.200 L30.400 5.800 L32.500 4.600 L34.800 3.800 L35.400 3.800 L35.400 15.800Z" fill="#161a14"/></g><g transform="translate(258.3 0)"><ellipse cx="11" cy="1.800" rx="8" ry="3" fill="#bdb5b2" filter="url(#cb)"/><ellipse cx="23" cy="6" rx="5" ry="2.400" fill="#dfe4ee" filter="url(#cb)"/><ellipse cx="6" cy="11" rx="5" ry="2.500" fill="#cfdcee" filter="url(#cb)"/><path d="M12.500 15.800 L15 12.500 L18 10.200 L22 9 L25.400 8.300 L28 7.200 L30.400 5.800 L32.500 4.600 L34.800 3.800 L35.400 3.800 L35.400 15.800Z" fill="#161a14"/></g><g transform="translate(295.2 0)"><ellipse cx="11" cy="1.800" rx="8" ry="3" fill="#bdb5b2" filter="url(#cb)"/><ellipse cx="23" cy="6" rx="5" ry="2.400" fill="#dfe4ee" filter="url(#cb)"/><ellipse cx="6" cy="11" rx="5" ry="2.500" fill="#cfdcee" filter="url(#cb)"/><path d="M12.500 15.800 L15 12.500 L18 10.200 L22 9 L25.400 8.300 L28 7.200 L30.400 5.800 L32.500 4.600 L34.800 3.800 L35.400 3.800 L35.400 15.800Z" fill="#161a14"/></g><g transform="translate(332.1 0)"><ellipse cx="11" cy="1.800" rx="8" ry="3" fill="#bdb5b2" filter="url(#cb)"/><ellipse cx="23" cy="6" rx="5" ry="2.400" fill="#dfe4ee" filter="url(#cb)"/><ellipse cx="6" cy="11" rx="5" ry="2.500" fill="#cfdcee" filter="url(#cb)"/><path d="M12.500 15.800 L15 12.500 L18 10.200 L22 9 L25.400 8.300 L28 7.200 L30.400 5.800 L32.500 4.600 L34.800 3.800 L35.400 3.800 L35.400 15.800Z" fill="#161a14"/></g><g transform="translate(369.0 0)"><ellipse cx="11" cy="1.800" rx="8" ry="3" fill="#bdb5b2" filter="url(#cb)"/><ellipse cx="23" cy="6" rx="5" ry="2.400" fill="#dfe4ee" filter="url(#cb)"/><ellipse cx="6" cy="11" rx="5" ry="2.500" fill="#cfdcee" filter="url(#cb)"/><path d="M12.500 15.800 L15 12.500 L18 10.200 L22 9 L25.400 8.300 L28 7.200 L30.400 5.800 L32.500 4.600 L34.800 3.800 L35.400 3.800 L35.400 15.800Z" fill="#161a14"/></g><g transform="translate(405.9 0)"><ellipse cx="11" cy="1.800" rx="8" ry="3" fill="#bdb5b2" filter="url(#cb)"/><ellipse cx="23" cy="6" rx="5" ry="2.400" fill="#dfe4ee" filter="url(#cb)"/><ellipse cx="6" cy="11" rx="5" ry="2.500" fill="#cfdcee" filter="url(#cb)"/><path d="M12.500 15.800 L15 12.500 L18 10.200 L22 9 L25.400 8.300 L28 7.200 L30.400 5.800 L32.500 4.600 L34.800 3.800 L35.400 3.800 L35.400 15.800Z" fill="#161a14"/></g><g transform="translate(442.8 0)"><ellipse cx="11" cy="1.800" rx="8" ry="3" fill="#bdb5b2" filter="url(#cb)"/><ellipse cx="23" cy="6" rx="5" ry="2.400" fill="#dfe4ee" filter="url(#cb)"/><ellipse cx="6" cy="11" rx="5" ry="2.500" fill="#cfdcee" filter="url(#cb)"/><path d="M12.500 15.800 L15 12.500 L18 10.200 L22 9 L25.400 8.300 L28 7.200 L30.400 5.800 L32.500 4.600 L34.800 3.800 L35.400 3.800 L35.400 15.800Z" fill="#161a14"/></g><g transform="translate(479.7 0)"><ellipse cx="11" cy="1.800" rx="8" ry="3" fill="#bdb5b2" filter="url(#cb)"/><ellipse cx="23" cy="6" rx="5" ry="2.400" fill="#dfe4ee" filter="url(#cb)"/><ellipse cx="6" cy="11" rx="5" ry="2.500" fill="#cfdcee" filter="url(#cb)"/><path d="M12.500 15.800 L15 12.500 L18 10.200 L22 9 L25.400 8.300 L28 7.200 L30.400 5.800 L32.500 4.600 L34.800 3.800 L35.400 3.800 L35.400 15.800Z" fill="#161a14"/></g><g transform="translate(516.6 0)"><ellipse cx="11" cy="1.800" rx="8" ry="3" fill="#bdb5b2" filter="url(#cb)"/><ellipse cx="23" cy="6" rx="5" ry="2.400" fill="#dfe4ee" filter="url(#cb)"/><ellipse cx="6" cy="11" rx="5" ry="2.500" fill="#cfdcee" filter="url(#cb)"/><path d="M12.500 15.800 L15 12.500 L18 10.200 L22 9 L25.400 8.300 L28 7.200 L30.400 5.800 L32.500 4.600 L34.800 3.800 L35.400 3.800 L35.400 15.800Z" fill="#161a14"/></g><g transform="translate(553.5 0)"><ellipse cx="11" cy="1.800" rx="8" ry="3" fill="#bdb5b2" filter="url(#cb)"/><ellipse cx="23" cy="6" rx="5" ry="2.400" fill="#dfe4ee" filter="url(#cb)"/><ellipse cx="6" cy="11" rx="5" ry="2.500" fill="#cfdcee" filter="url(#cb)"/><path d="M12.500 15.800 L15 12.500 L18 10.200 L22 9 L25.400 8.300 L28 7.200 L30.400 5.800 L32.500 4.600 L34.800 3.800 L35.400 3.800 L35.400 15.800Z" fill="#161a14"/></g><g transform="translate(590.4 0)"><ellipse cx="11" cy="1.800" rx="8" ry="3" fill="#bdb5b2" filter="url(#cb)"/><ellipse cx="23" cy="6" rx="5" ry="2.400" fill="#dfe4ee" filter="url(#cb)"/><ellipse cx="6" cy="11" rx="5" ry="2.500" fill="#cfdcee" filter="url(#cb)"/><path d="M12.500 15.800 L15 12.500 L18 10.200 L22 9 L25.400 8.300 L28 7.200 L30.400 5.800 L32.500 4.600 L34.800 3.800 L35.400 3.800 L35.400 15.800Z" fill="#161a14"/></g><g transform="translate(627.3 0)"><ellipse cx="11" cy="1.800" rx="8" ry="3" fill="#bdb5b2" filter="url(#cb)"/><ellipse cx="23" cy="6" rx="5" ry="2.400" fill="#dfe4ee" filter="url(#cb)"/><ellipse cx="6" cy="11" rx="5" ry="2.500" fill="#cfdcee" filter="url(#cb)"/><path d="M12.500 15.800 L15 12.500 L18 10.200 L22 9 L25.400 8.300 L28 7.200 L30.400 5.800 L32.500 4.600 L34.800 3.800 L35.400 3.800 L35.400 15.800Z" fill="#161a14"/></g><g transform="translate(664.2 0)"><ellipse cx="11" cy="1.800" rx="8" ry="3" fill="#bdb5b2" filter="url(#cb)"/><ellipse cx="23" cy="6" rx="5" ry="2.400" fill="#dfe4ee" filter="url(#cb)"/><ellipse cx="6" cy="11" rx="5" ry="2.500" fill="#cfdcee" filter="url(#cb)"/><path d="M12.500 15.800 L15 12.500 L18 10.200 L22 9 L25.400 8.300 L28 7.200 L30.400 5.800 L32.500 4.600 L34.800 3.800 L35.400 3.800 L35.400 15.800Z" fill="#161a14"/></g><g transform="translate(701.1 0)"><ellipse cx="11" cy="1.800" rx="8" ry="3" fill="#bdb5b2" filter="url(#cb)"/><ellipse cx="23" cy="6" rx="5" ry="2.400" fill="#dfe4ee" filter="url(#cb)"/><ellipse cx="6" cy="11" rx="5" ry="2.500" fill="#cfdcee" filter="url(#cb)"/><path d="M12.500 15.800 L15 12.500 L18 10.200 L22 9 L25.400 8.300 L28 7.200 L30.400 5.800 L32.500 4.600 L34.800 3.800 L35.400 3.800 L35.400 15.800Z" fill="#161a14"/></g>
<rect y="15.600" width="721.700" height="3.700" fill="#6dbca5"/>
<rect y="15.600" width="4.400" height="12.200" fill="#6dbca5"/>
<rect x="4.400" y="19.300" width="717.300" height="0.600" fill="#d9d0e8"/>
</g></svg>
<div class="a" style="left:793px;top:369px;width:7px;height:144px;background:#545766;"></div>
<div class="a" style="left:793.5px;top:370px;width:6.5px;height:18px;background:#e9e9f2;border-radius:3px 0 0 3px"></div>
<div class="a" style="left:0px;top:502px;width:793px;height:11px;background:#4f5160;"></div>
<div class="a" style="left:0px;top:502px;width:390px;height:11px;background:#e7e7f0;border-radius:0 4px 0 0"></div>
<div class="a" style="left:11px;top:372px;width:1.7px;height:141px;background:#e9e9ee;"></div>
<svg style="left:8px;top:369px" width="8" height="10" viewBox="0 0 8 10"><path d="M0.400 1.600 Q0.400 0.200 1.800 0.200 L6 0.200 Q7.400 0.200 7.400 1.600 L7.400 5.600 L3.900 9.400 L0.400 5.600Z" fill="#fff"/></svg>
</body>
</html>
